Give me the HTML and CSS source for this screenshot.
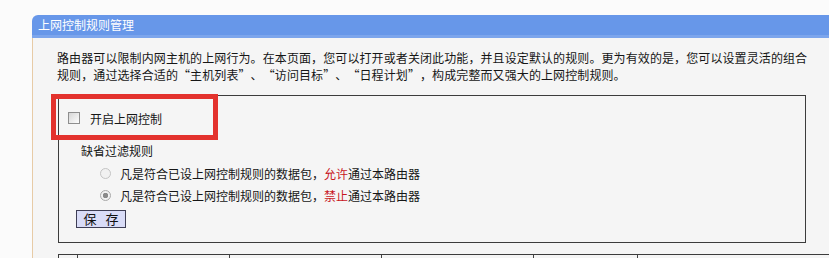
FILE: index.html
```html
<!DOCTYPE html>
<html lang="zh-CN">

<head>
    <meta charset="UTF-8">
    <meta name="viewport" content="width=device-width, initial-scale=1.0">
    <title>上网控制规则管理</title>
    <link rel="stylesheet" href="styles.css">
</head>

<body>
    <div class="page">
        <div class="panel">
            <div class="panel-title">上网控制规则管理</div>
            <div class="panel-body">
                <p class="intro">路由器可以限制内网主机的上网行为。在本页面，您可以打开或者关闭此功能，并且设定默认的规则。更为有效的是，您可以设置灵活的组合规则，通过选择合适的“主机列表”、“访问目标”、“日程计划”，构成完整而又强大的上网控制规则。</p>

                <div class="rule-box">
                    <div class="mark"></div>
                    <label class="check-row">
                        <span class="checkbox"></span>
                        <span>开启上网控制</span>
                    </label>
                    <div class="group-title">缺省过滤规则</div>
                    <label class="radio-row">
                        <span class="radio"></span>
                        <span>凡是符合已设上网控制规则的数据包，<em>允许</em>通过本路由器</span>
                    </label>
                    <label class="radio-row">
                        <span class="radio checked"></span>
                        <span>凡是符合已设上网控制规则的数据包，<em>禁止</em>通过本路由器</span>
                    </label>
                    <button type="button" class="save-btn">保 存</button>
                </div>

                <div class="rule-table">
                    <div class="cell c-no"></div>
                    <div class="cell c-wide"></div>
                    <div class="cell c-wide"></div>
                    <div class="cell c-wide"></div>
                    <div class="cell c-last"></div>
                </div>
            </div>
        </div>
    </div>
</body>

</html>
```

FILE: styles.css
```css
body {
    margin: 0;
    background-color: #fbfbfb;
    font-family: "Noto Sans CJK SC", "Noto Sans", sans-serif;
    font-size: 12px;
    color: #161616;
    text-spacing-trim: space-all;
}

.page {
    padding: 15px 0 0 32px;
    height: 243px;
    overflow: hidden;
}

.panel-title {
    height: 20px;
    line-height: 20px;
    padding-left: 6px;
    color: #fff;
    background-color: #6797e9;
    border-bottom: 3px solid #7ca5ec;
    border-top-left-radius: 6px;
}

.panel-body {
    border-left: 1px solid #e7cba6;
    background-color: #f5f5f5;
    padding: 11px 0 0 24px;
    height: 240px;
}

.intro {
    margin: 0;
    width: 754px;
    line-height: 17px;
    letter-spacing: 0.1px;
}

.rule-box {
    position: relative;
    width: 746px;
    margin: 12px 0 0 1px;
    padding: 11px 0 14px 0;
    border: 1px solid #3c3c3c;
}

/* red annotation frame drawn over the box */
.mark {
    position: absolute;
    left: -8px;
    top: -2px;
    width: 157px;
    height: 36px;
    border: 5px solid #e3322d;
}

.check-row,
.radio-row {
    display: flex;
    align-items: center;
    height: 22px;
}

.check-row {
    padding-left: 9px;
    gap: 10px;
}

.checkbox {
    width: 10px;
    height: 10px;
    border: 1px solid #8e8e8e;
    background: linear-gradient(135deg, #d6d6d6, #fdfdfd);
}

.group-title {
    height: 22px;
    line-height: 22px;
    margin-top: 11px;
    padding-left: 22px;
}

.radio-row {
    padding-left: 41px;
    gap: 9px;
}

.radio-row:first-of-type {
    margin-top: 1px;
}

.radio {
    box-sizing: border-box;
    width: 11px;
    height: 11px;
    border: 1px solid #c4c4c4;
    border-radius: 50%;
    background-color: #f1f1f1;
}

.radio.checked {
    background: radial-gradient(circle, #8a8a8a 0 2.5px, #f1f1f1 3px);
    border-color: #a9a9a9;
}

.radio-row em {
    font-style: normal;
    color: #c8161d;
}

.save-btn {
    display: block;
    margin: 4px 0 0 17px;
    width: 50px;
    height: 18px;
    padding: 0;
    font-family: inherit;
    font-size: 13px;
    line-height: 16px;
    letter-spacing: 3px;
    text-indent: 3px;
    color: #111;
    background-color: #d9dcf7;
    border: 1px solid #3e3e55;
}

.rule-table {
    display: flex;
    margin: 11px 0 0 1px;
    height: 8px;
    border-top: 1px solid #3c3c3c;
    border-left: 1px solid #3c3c3c;
}

.cell {
    border-right: 1px solid #444;
}

.c-no {
    width: 18px;
}

.c-wide {
    width: 151px;
}

.c-last {
    width: 103px;
}
```
